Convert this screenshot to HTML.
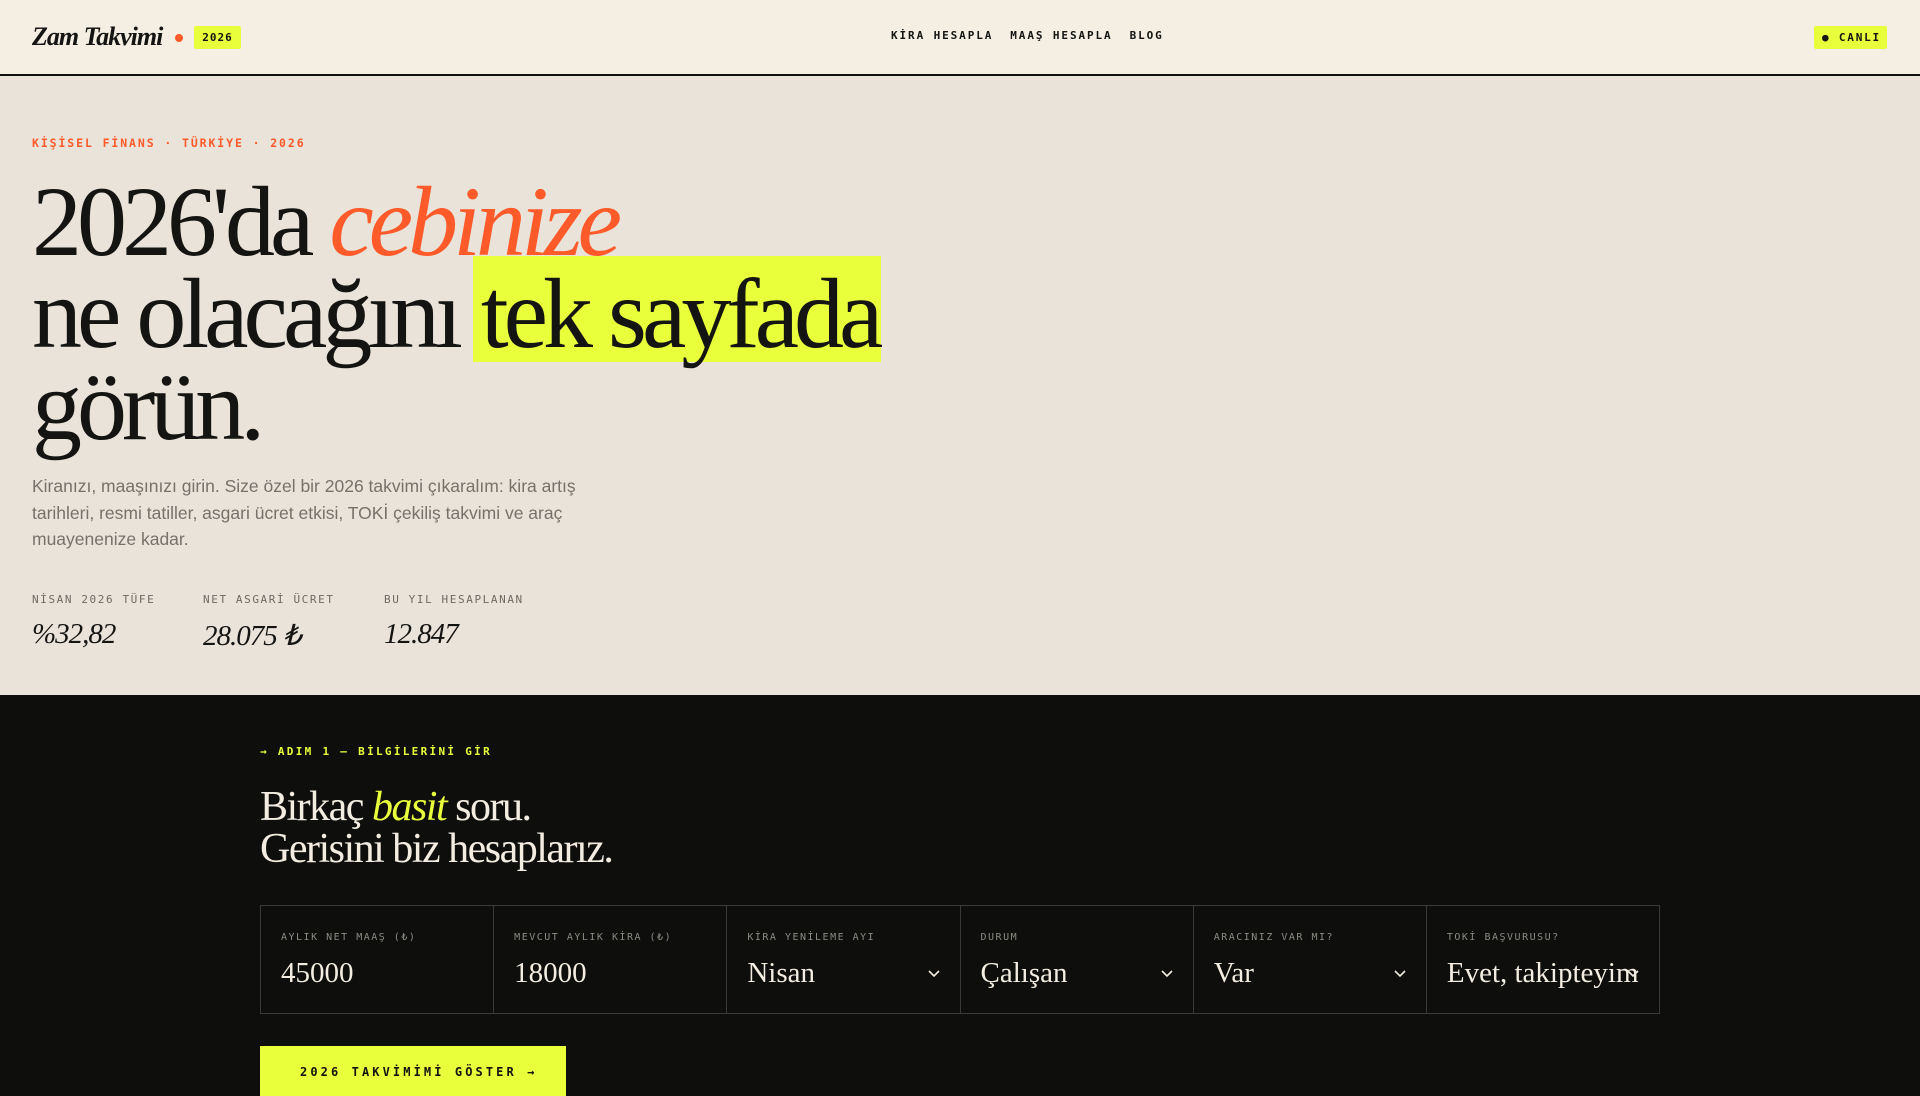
<!DOCTYPE html>
<html><head><meta charset="utf-8"><style>
*{margin:0;padding:0;box-sizing:border-box}
body{width:1920px;height:1080px;overflow:hidden;background:#0e0e0c;font-family:"Liberation Sans",sans-serif;position:relative}
.mono{font-family:"DejaVu Sans Mono","Liberation Mono",monospace}
header{position:absolute;left:0;top:0;width:1920px;height:75px;background:#f4eee3;border-bottom:1.5px solid #111}
.logo{position:absolute;left:32px;top:22px;font-family:"Liberation Serif",serif;font-style:italic;font-weight:bold;font-size:26px;letter-spacing:-1px;color:#141412}
.dot{position:absolute;left:175px;top:34px;width:8px;height:8px;border-radius:50%;background:#ff5a2a}
.badge{position:absolute;left:194px;top:26px;width:47px;height:23px;background:#e9ff3b;border-radius:2px;font-size:11px;font-weight:bold;letter-spacing:1px;text-align:center;line-height:23px;color:#141412}
nav{position:absolute;left:891px;top:29px;font-size:11px;font-weight:bold;letter-spacing:1.9px;color:#141412}
nav span{margin-right:17px}
.live{position:absolute;left:1814px;top:26px;width:73px;height:23px;background:#e9ff3b;border-radius:2px;font-size:11px;font-weight:bold;letter-spacing:1.8px;line-height:23px;color:#141412;padding-left:8px}
.hero{position:absolute;left:0;top:76px;width:1920px;height:619px;background:#e9e3d9}
.eyebrow{position:absolute;left:32px;top:60px;font-size:11.5px;font-weight:bold;letter-spacing:1.9px;color:#ff5a2a}
h1{position:absolute;z-index:2;left:32px;top:176px;font-family:"Liberation Serif",serif;font-weight:normal;font-size:100px;line-height:92px;letter-spacing:-5px;color:#141412;white-space:nowrap}
h1 i{color:#ff5a2a}
.hl{position:relative;margin-left:3px;display:inline-block;line-height:92px}
.hl::before{content:"";position:absolute;left:-8px;right:-3px;top:-12px;height:106px;background:#e9ff3b;z-index:-1}
p.lead{position:absolute;left:32px;top:473px;width:580px;font-size:17.5px;line-height:26.5px;color:#77716a}
.stat{position:absolute;top:593px}
.stat .l{font-size:11px;letter-spacing:1.6px;color:#6e6a63}
.stat .v{margin-top:12px;font-family:"Liberation Serif",serif;font-style:italic;font-size:29px;letter-spacing:-1px;color:#141412}
.ey2{position:absolute;left:260px;top:745px;font-size:11px;font-weight:bold;letter-spacing:2.3px;color:#e9ff3b}
h2{position:absolute;left:260px;top:786px;font-family:"Liberation Serif",serif;font-weight:normal;font-size:42px;line-height:42px;letter-spacing:-1.5px;color:#f3ede1}
h2 i{color:#e9ff3b}
.form{position:absolute;left:260px;top:905px;width:1400px;height:109px;border:1px solid #3a3a37;display:flex}
.cell{flex:1;border-right:1px solid #3a3a37;position:relative;padding:26px 20px 0}
.cell:last-child{border-right:none}
.cell .l{font-size:10px;letter-spacing:1.5px;color:#8d8a83}
.cell .v{margin-top:14px;font-family:"Liberation Serif",serif;font-size:29px;color:#f3ede1;white-space:nowrap}
.chev{position:absolute;right:20px;top:64px;width:12px;height:8px}
.btn{position:absolute;left:260px;top:1046px;width:306px;height:50px;background:#e9ff3b;font-size:12px;font-weight:bold;letter-spacing:3.1px;color:#141412;padding:19px 0 0 40px}
</style></head><body>
<header>
<div class="logo">Zam Takvimi</div><div class="dot"></div>
<div class="badge mono">2026</div>
<nav class="mono"><span>KİRA HESAPLA</span><span>MAAŞ HESAPLA</span><span>BLOG</span></nav>
<div class="live mono">● CANLI</div>
</header>
<div class="hero">
<div class="eyebrow mono">KİŞİSEL FİNANS · TÜRKİYE · 2026</div>
</div>
<h1>2026'da <i>cebinize</i><br>ne olacağını <span class="hl">tek sayfada</span><br>görün.</h1>
<p class="lead">Kiranızı, maaşınızı girin. Size özel bir 2026 takvimi çıkaralım: kira artış tarihleri, resmi tatiller, asgari ücret etkisi, TOKİ çekiliş takvimi ve araç muayenenize kadar.</p>
<div class="stat" style="left:32px"><div class="l mono">NİSAN 2026 TÜFE</div><div class="v">%32,82</div></div>
<div class="stat" style="left:203px"><div class="l mono">NET ASGARİ ÜCRET</div><div class="v">28.075 ₺</div></div>
<div class="stat" style="left:384px"><div class="l mono">BU YIL HESAPLANAN</div><div class="v">12.847</div></div>
<div class="ey2 mono">→ ADIM 1 — BİLGİLERİNİ GİR</div>
<h2>Birkaç <i>basit</i> soru.<br>Gerisini biz hesaplarız.</h2>
<div class="form">
<div class="cell"><div class="l mono">AYLIK NET MAAŞ (₺)</div><div class="v">45000</div></div>
<div class="cell"><div class="l mono">MEVCUT AYLIK KİRA (₺)</div><div class="v">18000</div></div>
<div class="cell"><div class="l mono">KİRA YENİLEME AYI</div><div class="v">Nisan</div><svg class="chev" viewBox="0 0 12 8"><path d="M1 1l5 5 5-5" fill="none" stroke="#f3ede1" stroke-width="1.6"/></svg></div>
<div class="cell"><div class="l mono">DURUM</div><div class="v">Çalışan</div><svg class="chev" viewBox="0 0 12 8"><path d="M1 1l5 5 5-5" fill="none" stroke="#f3ede1" stroke-width="1.6"/></svg></div>
<div class="cell"><div class="l mono">ARACINIZ VAR MI?</div><div class="v">Var</div><svg class="chev" viewBox="0 0 12 8"><path d="M1 1l5 5 5-5" fill="none" stroke="#f3ede1" stroke-width="1.6"/></svg></div>
<div class="cell"><div class="l mono">TOKİ BAŞVURUSU?</div><div class="v">Evet, takipteyim</div><svg class="chev" viewBox="0 0 12 8"><path d="M1 1l5 5 5-5" fill="none" stroke="#f3ede1" stroke-width="1.6"/></svg></div>
</div>
<div class="btn mono">2026 TAKVİMİMİ GÖSTER →</div>
</body></html>
